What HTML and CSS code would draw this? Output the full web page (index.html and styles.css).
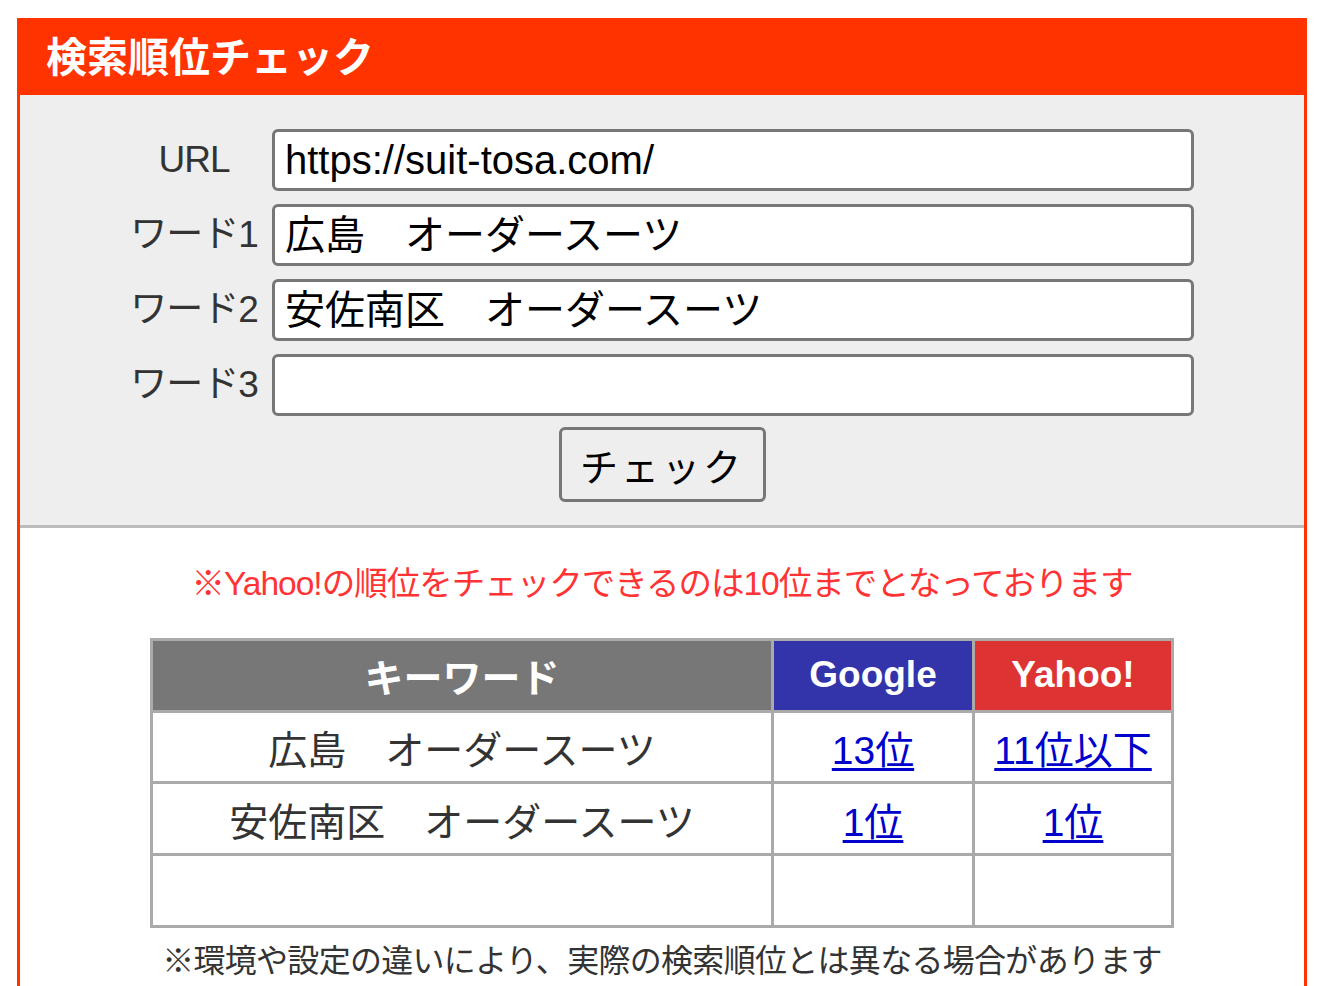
FILE: index.html
```html
<!DOCTYPE html>
<html lang="ja">
<head>
<meta charset="utf-8">
<title>検索順位チェック</title>
<link rel="stylesheet" href="styles.css">
</head>
<body>
<div class="box">
  <div class="head">検索順位チェック</div>
  <form class="form">
    <div class="grid">
      <label class="lbl">URL</label>
      <div class="inp">https://suit-tosa.com/</div>
      <label class="lbl">ワード1</label>
      <div class="inp">広島　オーダースーツ</div>
      <label class="lbl">ワード2</label>
      <div class="inp">安佐南区　オーダースーツ</div>
      <label class="lbl">ワード3</label>
      <div class="inp"></div>
    </div>
    <div class="btnrow"><button type="button" class="btn">チェック</button></div>
  </form>
  <div class="result">
    <p class="warn">※Yahoo!の順位をチェックできるのは10位までとなっております</p>
    <table class="tbl">
      <thead>
        <tr><th class="kw">キーワード</th><th class="g">Google</th><th class="y">Yahoo!</th></tr>
      </thead>
      <tbody>
        <tr><td>広島　オーダースーツ</td><td><a href="#">13位</a></td><td><a href="#">11位以下</a></td></tr>
        <tr><td>安佐南区　オーダースーツ</td><td><a href="#">1位</a></td><td><a href="#">1位</a></td></tr>
        <tr><td></td><td></td><td></td></tr>
      </tbody>
    </table>
    <p class="note">※環境や設定の違いにより、実際の検索順位とは異なる場合があります</p>
  </div>
</div>
</body>
</html>
```

FILE: styles.css
```css
html, body {
  margin: 0;
  padding: 0;
  background: #fff;
  font-family: "Liberation Sans", "Noto Sans CJK JP", sans-serif;
}
.box {
  margin: 18px 0 0 17px;
  width: 1290px;
  border: 3px solid #ff3300;
  border-bottom: none;
  height: 980px;
  box-sizing: border-box;
}
.head {
  background: #ff3300;
  color: #fff;
  font-weight: bold;
  font-size: 41px;
  height: 74px;
  line-height: 74px;
  padding-left: 26px;
  margin-top: -3px;
  padding-top: 3px;
}
.form {
  background: #eeeeee;
  border-bottom: 3px solid #bbbbbb;
  padding: 34px 0 23px;
  margin: 0;
}
.grid {
  display: grid;
  grid-template-columns: 128px 922px;
  column-gap: 14px;
  row-gap: 13px;
  justify-content: center;
}
.lbl {
  font-size: 37px;
  color: #333;
  text-align: center;
  line-height: 62px;
  white-space: nowrap;
  letter-spacing: -1px;
}
.inp {
  height: 62px;
  box-sizing: border-box;
  border: 3px solid #777;
  border-radius: 6px;
  background: #fff;
  font-size: 40px;
  line-height: 56px;
  padding-left: 10px;
  color: #000;
  white-space: pre;
}
.btnrow {
  display: flex;
  justify-content: center;
  margin-top: 11px;
}
.btn {
  width: 207px;
  height: 75px;
  border: 3px solid #777;
  border-radius: 6px;
  background: #eeeeee;
  font-family: "Noto Sans CJK JP", sans-serif;
  font-size: 38px;
  letter-spacing: 3px;
  color: #000;
  padding: 0;
}
.result {
  display: flex;
  flex-direction: column;
  align-items: center;
}
.warn {
  margin: 33px 0 0;
  color: #ff3333;
  font-size: 33.5px;
  line-height: 46px;
  letter-spacing: -1px;
}
.tbl {
  margin-top: 31px;
  border-collapse: collapse;
  width: 1024px;
  border: 3px solid #aaa;
}
.tbl th, .tbl td {
  border: 3px solid #aaa;
  text-align: center;
  padding: 0;
  height: 68.7px;
}
.tbl th {
  color: #fff;
  font-size: 37px;
  font-weight: bold;
}
.tbl th.kw { background: #777777; width: 618px; font-size: 39px; }
.tbl th.g { background: #3333aa; width: 198px; }
.tbl th.y { background: #dd3333; }
.tbl td {
  font-size: 39px;
  color: #333;
  white-space: pre;
}
.tbl td a {
  color: #0000cc;
  text-decoration: underline;
  text-decoration-thickness: 3px;
  text-underline-offset: 4px;
}
.note {
  margin: 10px 0 0;
  color: #333;
  font-size: 32px;
  letter-spacing: -0.7px;
  line-height: 46px;
}
```
